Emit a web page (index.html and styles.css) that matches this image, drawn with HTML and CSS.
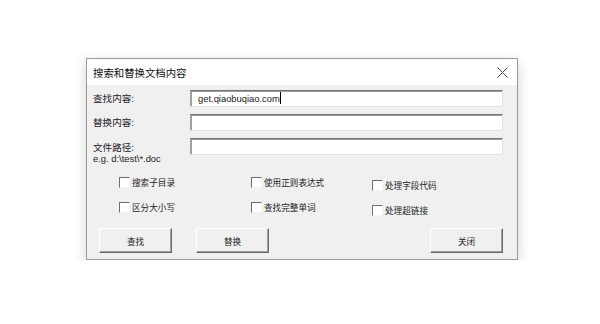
FILE: index.html
```html
<!DOCTYPE html>
<html lang="zh-CN">
<head>
    <meta charset="UTF-8">
    <title>搜索和替换文档内容</title>
    <link rel="stylesheet" href="styles.css">
</head>
<body>
    <div class="dialog">
        <div class="titlebar">
            <span class="title">搜索和替换文档内容</span>
            <span class="close">
                <svg width="11" height="11" viewBox="0 0 11 11"><path d="M0.5 0.5 L10.5 10.5 M10.5 0.5 L0.5 10.5" stroke="#444" stroke-width="1" fill="none"/></svg>
            </span>
        </div>
        <div class="body">
            <div class="field">
                <label class="label">查找内容:</label>
                <div class="input">get.qiaobuqiao.com<span class="caret"></span></div>
            </div>
            <div class="field">
                <label class="label">替换内容:</label>
                <div class="input"></div>
            </div>
            <div class="field">
                <label class="label path">文件路径:<span class="hint">e.g. d:\test\*.doc</span></label>
                <div class="input"></div>
            </div>

            <div class="checks">
                <div class="check"><span class="box"></span>搜索子目录</div>
                <div class="check"><span class="box"></span>使用正则表达式</div>
                <div class="check low"><span class="box"></span>处理字段代码</div>
                <div class="check"><span class="box"></span>区分大小写</div>
                <div class="check"><span class="box"></span>查找完整单词</div>
                <div class="check low"><span class="box"></span>处理超链接</div>
            </div>

            <div class="buttons">
                <button class="btn">查找</button>
                <button class="btn">替换</button>
                <span class="spacer"></span>
                <button class="btn">关闭</button>
            </div>
        </div>
    </div>
</body>
</html>
```

FILE: styles.css
```css
body {
    margin: 0;
    background-color: #fff;
    font-family: "Liberation Sans", "Noto Sans CJK SC", sans-serif;
    font-size: 11px;
    color: #222;
}

.dialog {
    width: 430px;
    margin: 58px 0 0 86px;
    border: 1px solid #9a9a9a;
    background-color: #f0f0f0;
    box-shadow: 0 4px 12px rgba(0, 0, 0, 0.18);
}

.titlebar {
    height: 26px;
    background-color: #fff;
    display: flex;
    align-items: center;
    justify-content: space-between;
    padding: 0 9px 0 6px;
}

.title {
    font-family: "Noto Sans CJK SC", sans-serif;
    font-size: 10.4px;
    color: #111;
}

.close {
    display: flex;
}

.body {
    padding: 5px 14px 6px 6px;
}

.field {
    display: flex;
    margin-bottom: 7px;
}

.label {
    width: 97px;
    font-family: "Noto Sans CJK SC", sans-serif;
    font-size: 9.6px;
    line-height: 12px;
    padding-top: 2px;
    color: #222;
}

.label.path {
    display: flex;
    flex-direction: column;
    padding-top: 3px;
}

.hint {
    font-family: "Liberation Sans", sans-serif;
    font-size: 9.4px;
    line-height: 11px;
}

.input {
    flex: 1;
    height: 15px;
    background-color: #fff;
    border-top: 1px solid #707070;
    border-left: 1px solid #a0a0a0;
    border-right: 1px solid #e3e3e3;
    border-bottom: 1px solid #e3e3e3;
    box-shadow: inset 1px 1px 0 #a0a0a0;
    padding-left: 7px;
    font-size: 9.4px;
    line-height: 16px;
    color: #222;
}

.caret {
    display: inline-block;
    width: 1px;
    height: 12px;
    background-color: #000;
    vertical-align: -2px;
}

.checks {
    display: grid;
    grid-template-columns: 132px 121px 120px;
    grid-auto-rows: 14px;
    row-gap: 11px;
    padding: 4px 0 0 26px;
}

.check {
    display: flex;
    align-items: center;
    gap: 2px;
    height: 14px;
    font-family: "Noto Sans CJK SC", sans-serif;
    font-size: 8.6px;
    color: #222;
}

.check.low {
    margin-top: 3px;
}

.box {
    width: 9px;
    height: 9px;
    background-color: #fff;
    border-top: 1px solid #6e6e6e;
    border-left: 1px solid #6e6e6e;
    border-right: 1px solid #f4f4f4;
    border-bottom: 1px solid #f4f4f4;
}

.buttons {
    display: flex;
    gap: 24px;
    padding: 14px 0 0 6px;
}

.spacer {
    flex: 1;
}

.btn {
    width: 73px;
    height: 25px;
    background-color: #f0f0f0;
    border-top: 1px solid #fff;
    border-left: 1px solid #fff;
    border-right: 1px solid #696969;
    border-bottom: 1px solid #696969;
    box-shadow: inset -1px -1px 0 #a0a0a0;
    font-family: "Noto Sans CJK SC", sans-serif;
    font-size: 8.6px;
    color: #222;
    padding: 0;
}
```
